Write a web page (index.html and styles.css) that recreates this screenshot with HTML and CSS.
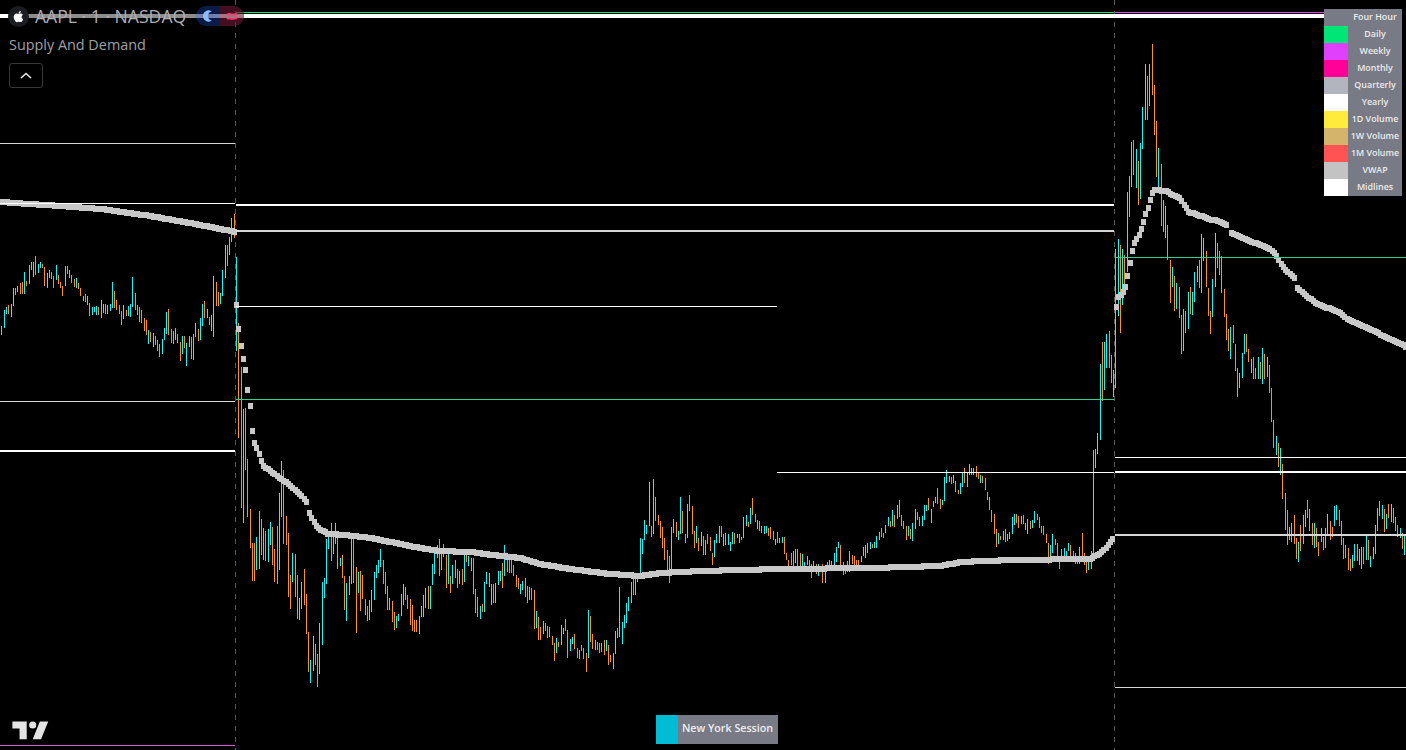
FILE: index.html
```html
<!DOCTYPE html>
<html lang="en">
<head>
<meta charset="utf-8">
<title>AAPL · 1 · NASDAQ</title>
<link rel="stylesheet" href="styles.css">
</head>
<body>
<main class="chart">
  <svg id="plot" class="plot" width="1406" height="750" viewBox="0 0 1406 750" aria-hidden="true"></svg>

  <header class="legend">
    <div class="title-row">
      <span class="symbol-logo">
        <svg width="15" height="15" viewBox="0 0 24 24"><path fill="#fff" d="M17.05 20.28c-.98.95-2.05.8-3.08.35-1.09-.46-2.09-.48-3.24 0-1.44.62-2.2.44-3.06-.35C2.79 15.25 3.51 7.59 9.05 7.31c1.35.07 2.29.74 3.08.8 1.18-.24 2.31-.93 3.57-.84 1.51.12 2.65.72 3.4 1.8-3.12 1.87-2.38 5.98.48 7.13-.57 1.5-1.31 2.99-2.54 4.09zM12.03 7.25c-.15-2.23 1.66-4.07 3.74-4.25.29 2.58-2.34 4.5-3.74 4.25z"/></svg>
      </span>
      <span class="symbol-name">AAPL · 1 · NASDAQ</span>
      <span class="status">
        <span class="status-part status-moon">
          <svg width="11" height="12" viewBox="0 0 12 12"><path fill="#8fbcff" d="M9.5 1.1A6 6 0 1 0 9.5 10.9 5 5 0 0 1 9.5 1.1Z"/></svg>
        </span>
        <span class="status-part status-wave">
          <svg width="12" height="12" viewBox="0 0 12 12"><path fill="none" stroke="#f7396f" stroke-width="1.8" d="M1 4.6c2.4-2 4 1.4 10-.8M1 9c2.4-2 4 1.4 10-.8"/></svg>
        </span>
      </span>
    </div>
    <div class="study-name">Supply And Demand</div>
    <button class="collapse" type="button" aria-label="Collapse">
      <svg width="12" height="7" viewBox="0 0 12 7"><path fill="none" stroke="#e8e8e8" stroke-width="1.6" d="M1 6l5-4.5L11 6"/></svg>
    </button>
  </header>

  <aside class="key">
    <div class="key-row"><span class="swatch sw-four"></span><span class="key-label">Four Hour</span></div>
    <div class="key-row"><span class="swatch sw-daily"></span><span class="key-label">Daily</span></div>
    <div class="key-row"><span class="swatch sw-weekly"></span><span class="key-label">Weekly</span></div>
    <div class="key-row"><span class="swatch sw-monthly"></span><span class="key-label">Monthly</span></div>
    <div class="key-row"><span class="swatch sw-quarterly"></span><span class="key-label">Quarterly</span></div>
    <div class="key-row"><span class="swatch sw-yearly"></span><span class="key-label">Yearly</span></div>
    <div class="key-row"><span class="swatch sw-1d"></span><span class="key-label">1D Volume</span></div>
    <div class="key-row"><span class="swatch sw-1w"></span><span class="key-label">1W Volume</span></div>
    <div class="key-row"><span class="swatch sw-1m"></span><span class="key-label">1M Volume</span></div>
    <div class="key-row"><span class="swatch sw-vwap"></span><span class="key-label">VWAP</span></div>
    <div class="key-row"><span class="swatch sw-mid"></span><span class="key-label">Midlines</span></div>
  </aside>

  <div class="session">
    <span class="session-swatch"></span>
    <span class="session-label">New York Session</span>
  </div>

  <svg class="tv-logo" width="43" height="34" viewBox="0 0 36 28" aria-label="TradingView">
    <path fill="#e4e4e4" d="M14 6H2v6h6v9h6V6Zm12 15h-7l6-15h7l-6 15Zm-7-9a3 3 0 1 0 0-6 3 3 0 0 0 0 6Z"/>
  </svg>
</main>
<script src="chart.js"></script>
</body>
</html>
```
FILE: styles.css
```css
* { box-sizing: border-box; }
html, body { margin: 0; padding: 0; background: #000; overflow: hidden; }
.chart {
  position: relative;
  width: 1406px;
  height: 750px;
  background: #000;
  font-family: "Open Sans", "Noto Sans", sans-serif;
  overflow: hidden;
}
.plot { display: block; shape-rendering: crispEdges; }

.legend {
  position: absolute;
  left: 8px;
  top: 6px;
  display: flex;
  flex-direction: column;
  align-items: flex-start;
}
.title-row {
  display: flex;
  align-items: center;
  height: 20px;
  background: rgba(0, 0, 0, .45);
}
.symbol-logo {
  width: 21px;
  height: 21px;
  border-radius: 50%;
  background: #1b1d21;
  display: flex;
  align-items: center;
  justify-content: center;
}
.symbol-name {
  margin-left: 6px;
  font-size: 17.6px;
  line-height: 20px;
  color: #aeafb4;
  white-space: nowrap;
}
.status { display: flex; margin-left: 10px; height: 20px; }
.status-part { width: 24px; display: flex; align-items: center; justify-content: center; }
.status-moon { background: rgba(41, 98, 255, .28); border-radius: 10px 0 0 10px; }
.status-wave { background: rgba(242, 54, 109, .28); border-radius: 0 10px 10px 0; }
.study-name {
  margin: 9px 0 0 1px;
  font-size: 14.4px;
  line-height: 20px;
  color: #a0a1a7;
  white-space: nowrap;
}
.collapse {
  margin: 8px 0 0 1px;
  width: 34px;
  height: 25px;
  padding: 0;
  display: flex;
  align-items: center;
  justify-content: center;
  background: #000;
  border: 1px solid #363636;
  border-radius: 3px;
}

.key {
  position: absolute;
  left: 1324px;
  top: 9px;
  width: 78px;
  display: flex;
  flex-direction: column;
  background: #787b86;
}
.key-row { display: flex; height: 17px; }
.swatch { width: 24px; flex: none; }
.key-label {
  flex: 1;
  text-align: center;
  font-size: 8.9px;
  font-weight: 600;
  line-height: 15px;
  color: #ececec;
  white-space: nowrap;
}
.sw-four { background: #787b86; }
.sw-daily { background: #00e676; }
.sw-weekly { background: #e040fb; }
.sw-monthly { background: #ff0099; }
.sw-quarterly { background: #b2b5be; }
.sw-yearly { background: #ffffff; }
.sw-1d { background: #ffeb3b; }
.sw-1w { background: #d4b46a; }
.sw-1m { background: #ff5252; }
.sw-vwap { background: #c3c3c3; }
.sw-mid { background: #ffffff; }

.session {
  position: absolute;
  left: 656px;
  top: 715px;
  width: 122px;
  height: 29px;
  display: flex;
  background: #787b86;
}
.session-swatch { width: 22px; background: #00bcd4; flex: none; }
.session-label {
  flex: 1;
  padding-left: 4px;
  font-size: 10.7px;
  font-weight: 600;
  line-height: 27px;
  color: #eeeeee;
  white-space: nowrap;
}

.tv-logo { position: absolute; left: 10px; top: 714px; }
```
FILE: chart.js
```js
(function () {
  var NS = "http://www.w3.org/2000/svg";
  var svg = document.getElementById("plot");
  var COLORS = { c: "#00ffff", o: "#ff9800" };
  var VWAP = "#c8c8c8", GREEN = "#2ad48f", LIME = "#00e676", WHITE = "#ffffff", SILVER = "#d6d6d6", PURPLE = "#e040fb", PINK = "#d35cd8";

  function add(tag, attrs) {
    var el = document.createElementNS(NS, tag);
    for (var k in attrs) el.setAttribute(k, attrs[k]);
    svg.appendChild(el);
  }
  function interp(pts, x) {
    if (x <= pts[0][0]) return pts[0][1];
    for (var i = 1; i < pts.length; i++) {
      if (x <= pts[i][0]) {
        var a = pts[i - 1], b = pts[i];
        return a[1] + (b[1] - a[1]) * (x - a[0]) / (b[0] - a[0]);
      }
    }
    return pts[pts.length - 1][1];
  }

  // session separators
  [235, 1114].forEach(function (x) {
    add("line", { x1: x + .5, x2: x + .5, y1: 0, y2: 750, stroke: "#5a5a5a", "stroke-dasharray": "5 6" });
  });

  // OHLC bars, traced at 3x: colour + x, top, bottom; offset gives the plot position
  var bars = [
    [0, 190, "c4 408 435,c13 360 414,c19 351 372,o25 345 372,c34 342 381,c40 294 348,o46 294 315,c52 288 306,o61 279 312,o67 276 312,c73 246 312,o79 273 288,c88 225 282,c94 216 240,c100 216 261,o106 198 255,c115 222 249,c121 216 234,o127 222 234,o133 231 288,c142 249 294,c148 240 264,o154 246 267,o160 258 294,c169 225 270,o175 255 282,o181 276 294,o187 288 318,c196 228 288,o202 228 252,c208 240 264,o214 255 279,o223 267 291,c229 264 294,o235 279 297,o241 294 318,c250 318 333,o256 312 336,c262 318 345,o268 339 378,c277 351 375,c283 351 366,c289 348 375,o295 351 375,c304 330 384,c310 342 369,o316 342 372,c322 345 372,c331 342 363,c337 276 354,o343 303 354,o349 330 360,o358 345 372,o364 363 405,c370 345 387,o379 360 378,c385 348 378,c391 342 381,c397 261 351,o406 309 360,o412 345 375,o418 351 396,o424 360 399,o433 384 423,o439 390 435,c445 420 462,o451 426 456,c460 429 471,o466 438 465,o472 450 483,o478 462 501,c487 447 492,c493 414 450,c499 366 432,o505 357 435,o514 417 459,c520 423 462,c526 414 450,o532 432 459,o541 456 513,c547 438 492,o553 438 474,c559 459 528,c568 438 471,o574 441 507,c580 432 510,c586 399 441,o595 417 453,c601 384 450,c607 342 408,o613 333 384,c622 357 384,o628 381 405,c634 375 423,c640 258 441,o649 276 348,o655 306 348,c661 309 342,c667 240 318,c676 165 264,o682 165 228,c688 141 195,c694 84 156,o703 72 144,c709 201 483"],
    [226, 295, "o37 85 429,o46 216 639"],
    [230, 380, "c40 87 429,o46 84 270,o52 237 411,o61 387 504,o67 489 603,o73 489 603,c79 471 570,c88 393 567,o94 417 525,c100 444 540,o106 453 543,c115 447 546,c121 426 495,o127 441 555,o133 507 606,o142 438 612,c148 339 570,c154 243 411,o160 270 492,o169 408 495,o175 459 651,o181 585 687,c187 519 606,o196 522 651,o202 585 717,c208 654 720,c214 606 687,o223 567 675,o229 642 762,o235 756 876,c241 840 909,c250 768 873,o256 792 855,o262 822 921,c268 729 882,c277 606 795,c283 594 654,c289 477 612,c295 456 507,o304 429 543,c310 471 522,c316 429 492,o322 471 567,c331 534 558,o337 525 594,o343 588 690,c349 609 723,c358 588 645,c364 459 612,o370 468 609,o379 561 759,c385 576 639,o391 573 693,o397 585 657,o406 657 705,o412 678 723,c418 660 720,c424 630 696,c433 576 660,c439 555 594,c445 540 579,c451 507 561,o460 540 612,o466 576 642,o472 618 690,c478 654 690,o487 663 726,o493 696 750,c499 708 744,c505 702 723,c514 642 708,c520 612 675,o526 621 660,o532 645 687,o541 657 735,o547 675 753,o553 720 756,o559 720 756,c568 708 762,c574 678 711,c580 645 711,c586 624 684,o595 618 687,c601 618 687,c607 552 615,c613 501 582,c622 495 534,o628 477 588,c634 507 570,o640 492 531,o649 525 624,c655 522 612,o661 588 639,c667 555 612,o676 540 594,o682 567 624,c688 573 612,o697 567 615,c703 510 606,o709 513 546,c715 528 558,c724 534 573,o730 534 642,o736 627 699,o742 651 711,c751 678 717,o757 672 696,c763 606 696,c769 576 612,c778 579 621,c784 612 675,o790 612 669,c796 609 669,c805 573 615,c811 573 603,o817 549 624,c823 495 588,o832 519 576,o838 534 579,o844 534 579,o850 555 588,o859 585 621,o865 594 627,c871 612 642,c877 603 630,o886 594 651,o892 618 669,c898 621 660"],
    [520, 460, "o34 384 420,o43 390 507,c49 453 504,o55 471 540,o61 501 540,c70 483 522,o76 489 513,o82 498 534,o88 501 531,o97 528 555,o103 549 603,c109 534 579,o115 546 561,c124 495 555,c130 504 522,o136 477 513,o142 510 594,c151 537 573,c157 531 552,o163 522 567,o172 564 594,c178 570 597,o184 555 573,o190 564 597,o199 579 636,c205 450 594,o211 468 546,o217 522 567,c226 540 570,o232 546 570,o238 549 579,o244 549 576,o253 540 585,c259 540 573,o265 555 615,o271 585 606,c280 579 627,c286 513 582,o292 504 534,c298 381 531,c307 486 552,c313 465 504,c319 429 489,c325 411 453,c334 366 429,o340 354 405,c346 339 405,c352 339 366,c361 234 345,c367 237 282,c373 180 240,c379 195 222,c388 66 198,o394 198 231,c400 57 222,o406 111 183,o415 165 195,o421 183 234,o427 201 264,o433 234 300,o442 270 333,o448 288 369,c454 201 333,c460 177 219,o469 186 231,c475 213 240,c481 111 222,o487 153 219,o496 222 249,c502 132 234,o508 105 153,o517 138 222,o523 213 264,c529 198 249,o535 234 273,c544 216 258,o550 228 285,c556 240 285,o562 222 252,o571 231 273,o577 279 315,c583 240 291,c589 222 249,c598 198 249,o604 198 231,c610 222 258,c616 219 255,c625 222 255,c631 246 273,c637 216 252,o643 219 252,c652 222 234,c658 222 249,c664 231 240,c670 171 234,c679 165 198,o685 186 201,c691 144 192,o697 114 165,o706 162 186,c712 180 207,o718 183 213,c724 198 219,c733 198 222,c739 198 219,o745 204 228,o751 201 237,o760 213 240,c766 237 255,o772 216 249,c778 234 249,c787 231 249,o793 231 282,o799 279 300,o805 300 333,o814 279 315,c820 273 327,c826 267 309,o832 267 321,o841 279 321,c847 282 318,c853 306 333,c862 288 315,o868 300 327,o874 312 354,c880 303 330,o889 312 342,c895 312 348"],
    [800, 450, "o67 342 399,c76 351 399,o82 336 360,c88 330 360,c94 333 348,c103 309 351,c109 291 336,c115 276 294,o121 285 345,o130 336 375,o136 363 372,o142 333 366,c148 303 366,o157 315 342,o163 318 345,o169 330 351,o175 330 345,c184 318 336,c190 291 318,c196 285 324,c202 279 309,c211 276 297,o217 282 294,c223 276 294,c229 258 294,c238 246 270,o244 234 261,o250 249 264,c256 225 249,c265 201 228,o271 213 231,c277 180 228,o283 195 231,c292 165 207,o298 150 201,o304 195 228,o310 213 237,o319 228 270,c325 228 258,o331 237 267,c337 219 273,c346 177 237,o352 186 210,o358 201 228,c367 198 228,c373 165 210,c379 165 183,o385 144 180,c394 177 219,c400 153 171,c406 141 159,o412 114 162,o421 147 177,c427 150 165,c433 81 153,c439 60 99,c448 78 96,o454 81 102,c460 75 99,o466 93 126,o475 120 132,c481 99 132,c487 66 111,o493 54 99,c502 66 111,c508 42 75,c514 54 75,c520 54 75,o529 48 81,o535 69 87,c541 75 99,o547 78 99,o556 84 120,o562 126 150,o568 141 180,o574 180 216,o583 192 252,o589 237 291,c595 249 282,o601 258 270,c610 243 270,o616 237 276,c622 252 273,c628 246 267,c637 201 252,c643 192 225,o649 192 219,o655 198 234,c664 198 222,o670 195 222,c676 219 240,c682 207 252,o691 213 237,c697 210 234,c703 183 219,o712 192 210,o718 201 234,o724 228 249,o730 228 255,o739 252 279,o745 279 342,c751 285 327,c757 252 309,o766 267 285,o772 279 330,o778 324 357,c784 297 330,c793 294 324,c799 303 333,c805 279 303,o811 285 330,o820 303 330,o826 309 342,c832 318 342,c838 291 342,o847 249 321,o853 309 345,o859 333 369,c865 336 360,c874 303 357"],
    [1088, 240, "c16 630 960,c22 627 684,c28 579 642,c37 372 600,o43 306 483,c49 306 450,c55 282 384,o64 273 384,o70 345 429,c76 390 471,c82 27 444"],
    [1085, 30, "c100 627 858,o106 645 908,c112 657 824,o118 675 762,c127 487 725,c133 438 560,c139 336 470,o145 330 434,c154 357 473,o160 393 524,c166 339 506,c172 232 356,c181 102 270,o187 138 270,c193 102 228,o202 42 194,o208 166 315,o214 273 440,c220 354 476,o229 402 587,c235 510 606,c241 528 624,o247 585 690,o256 690 820,c262 711 771,o268 738 843,c274 759 837,o283 771 864,o289 855 972,c295 837 963,o301 843 909,c310 786 897,o316 771 852,c322 786 855,c328 726 816,c337 708 756,o343 690 774,c349 612 789,c355 624 693,o364 663 771,o370 774 858,o376 843 912,c382 747 861,c391 609 771,o397 639 714,o403 663 735,o409 678 789,o418 777 861,o424 852 930,o430 897 963,c436 891 987,o445 885 939"],
    [1200, 220, "o106 372 453,o112 444 531,c118 459 504,c127 399 474,c133 342 402,o139 342 396,o145 387 426,c154 417 459,o160 411 477,o166 444 477,c175 411 477,o181 426 477,c187 384 492,o193 402 477,c202 411 471,o208 435 519,o214 504 606,o220 600 684,c229 648 705,o235 669 741,c241 684 765,o247 732 837,o256 819 930,o262 870 975,c268 921 960,c274 909 966,o283 885 972,o289 954 1017,c295 966 1026,o301 915 993,c310 885 972,c316 870 921,o322 840 894,o328 867 933,o337 909 975,c343 909 984,o349 924 981,o355 966 1008,c364 924 966,o370 951 990,c376 924 984,c382 882 948,o391 903 960,o397 921 951,c403 858 918,c409 855 900,o418 870 918,o424 903 975,o430 954 1017,o436 975 1014,o445 984 1050,o451 1017 1053,c457 1005 1044,c463 972 1023,o472 972 1023,c478 987 1035,c484 981 1047,o490 981 1032,c499 942 1020,o505 960 1020,c511 1008 1041,c520 981 1017,c526 915 1002,c532 864 933,c538 843 888,c547 855 897,o553 867 936,c559 882 927,o565 852 894,c574 852 906,o580 864 909,o586 891 933,o592 915 951,c601 924 954,o607 939 987,c613 945 1005"]
  ];
  bars.forEach(function (group) {
    group[2].split(",").forEach(function (item) {
      var p = item.slice(1).split(" ").map(Number);
      var top = Math.round(group[1] + p[1] / 3);
      add("rect", {
        x: Math.floor(group[0] + p[0] / 3),
        y: top,
        width: 1,
        height: Math.round(group[1] + p[2] / 3) - top,
        fill: COLORS[item.charAt(0)]
      });
    });
  });

  // VWAP: one square per bar, so it breaks into dots where price moves fast
  var vwap = [
    [[0,202],[60,206],[100,209],[150,216],[200,225],[235,232]],
    [[236,305],[238,327],[241,350],[245,370],[247,388],[250,410],[252,434],[254,443],[259,455],[262,465],[275,475],[285,482],[300,495],[306,502]],
    [[309,513],[315,525],[322,531],[328,534],[345,535],[370,538],[395,543],[420,548],[440,551],[470,552],[500,556],[520,558],[540,564],[570,569],[610,574],[640,576],[660,573],[700,571],[780,569],[870,568],[940,566],[960,562],[1010,560],[1090,559],[1100,553],[1108,545],[1114,536]],
    [[1116,307],[1118,297],[1124,291],[1127,278],[1129,265],[1131,255],[1133,244],[1137,238],[1140,231],[1142,225],[1145,215],[1147,210],[1149,202],[1152,193],[1154,190],[1165,191],[1175,196],[1180,198],[1182,203],[1185,207],[1188,212],[1198,215],[1208,219],[1218,221],[1225,224],[1228,227]],
    [[1231,233],[1242,238],[1252,242],[1265,247],[1270,249],[1276,256],[1278,260],[1285,270],[1294,278]],
    [[1297,288],[1307,297],[1317,304],[1338,312],[1348,320],[1375,332],[1406,347]]
  ];
  vwap.forEach(function (seg) {
    var end = seg[seg.length - 1][0];
    for (var x = seg[0][0]; x <= end; x += 2.25) {
      add("rect", { x: Math.round(x) - 2, y: Math.round(interp(seg, x)) - 3, width: 5, height: 6, fill: VWAP });
    }
  });

  // horizontal levels: y, x1, x2, thickness, colour
  [
    [14, 0, 1324, 4, WHITE], [12, 236, 1114, 1, LIME], [12, 1115, 1324, 1, PURPLE],
    [143, 0, 235, 1, SILVER], [203, 0, 235, 1, WHITE], [401, 0, 235, 1, SILVER], [450, 0, 235, 2, WHITE], [745, 0, 235, 1, PINK],
    [204, 236, 1114, 2, WHITE], [230, 236, 1114, 2, SILVER], [306, 236, 777, 1, WHITE], [399, 236, 1114, 1, GREEN], [472, 777, 1114, 1, WHITE],
    [257, 1115, 1406, 1, GREEN], [457, 1115, 1406, 1, WHITE], [471, 1115, 1406, 2, WHITE], [534, 1115, 1406, 2, SILVER], [687, 1115, 1406, 1, SILVER]
  ].forEach(function (l) {
    add("rect", { x: l[1], y: l[0], width: l[2] - l[1], height: l[3], fill: l[4] });
  });
})();
```
